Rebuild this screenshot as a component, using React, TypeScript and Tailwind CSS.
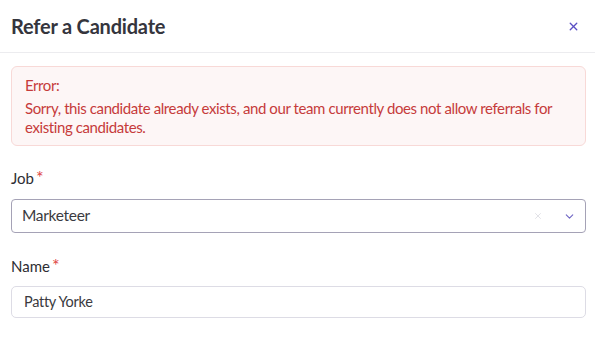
import { X, ChevronDown } from "lucide-react";

export default function App() {
  return (
    <div className="w-[595px] h-[343px] bg-white overflow-hidden font-['Lato',sans-serif]">
      <div className="flex items-center justify-between h-[53px] pl-[11px] pr-[9px] border-b border-[#ececef]">
        <h2 className="text-[20px] font-bold text-[#35353d] tracking-[-0.2px]">Refer a Candidate</h2>
        <button className="mr-[6px] text-[#5a4fc4]">
          <X className="w-[13px] h-[13px]" strokeWidth={2.5} />
        </button>
      </div>
      <div className="pl-[11px] pr-[9px] pt-[13px]">
        <div className="rounded-[6px] border border-[#f8d9d7] bg-[#fdf6f6] px-[13px] pt-[9px] pb-[8px] text-[#c63b3b] text-[15px] leading-[19px] tracking-[-0.4px]">
          <p>Error:</p>
          <p className="mt-[4px]">
            Sorry, this candidate already exists, and our team currently does not allow referrals for existing candidates.
          </p>
        </div>
        <label className="block mt-[22px] text-[15px] text-[#2d2d33] leading-[19px]">
          Job<span className="text-[#e04646] ml-[2px] text-[18px]">*</span>
        </label>
        <div className="mt-[11px] h-[34px] flex items-center rounded-[4px] border border-[#a5a2b6] pl-[10px] pr-[9px]">
          <span className="flex-1 text-[15.5px] text-[#3a3a40] tracking-[-0.3px]">Marketeer</span>
          <X className="w-[10px] h-[10px] text-[#dcdce2] mr-[20px]" strokeWidth={2} />
          <ChevronDown className="w-[13px] h-[13px] text-[#6f65c4]" strokeWidth={2} />
        </div>
        <label className="block mt-[23px] text-[15px] text-[#2d2d33] leading-[19px]">
          Name<span className="text-[#e04646] ml-[2px] text-[18px]">*</span>
        </label>
        <div className="mt-[10px] h-[32px] flex items-center rounded-[5px] border border-[#dddce5] pl-[12px]">
          <span className="text-[14.5px] text-[#3a3a40] tracking-[-0.3px]">Patty Yorke</span>
        </div>
      </div>
    </div>
  );
}
